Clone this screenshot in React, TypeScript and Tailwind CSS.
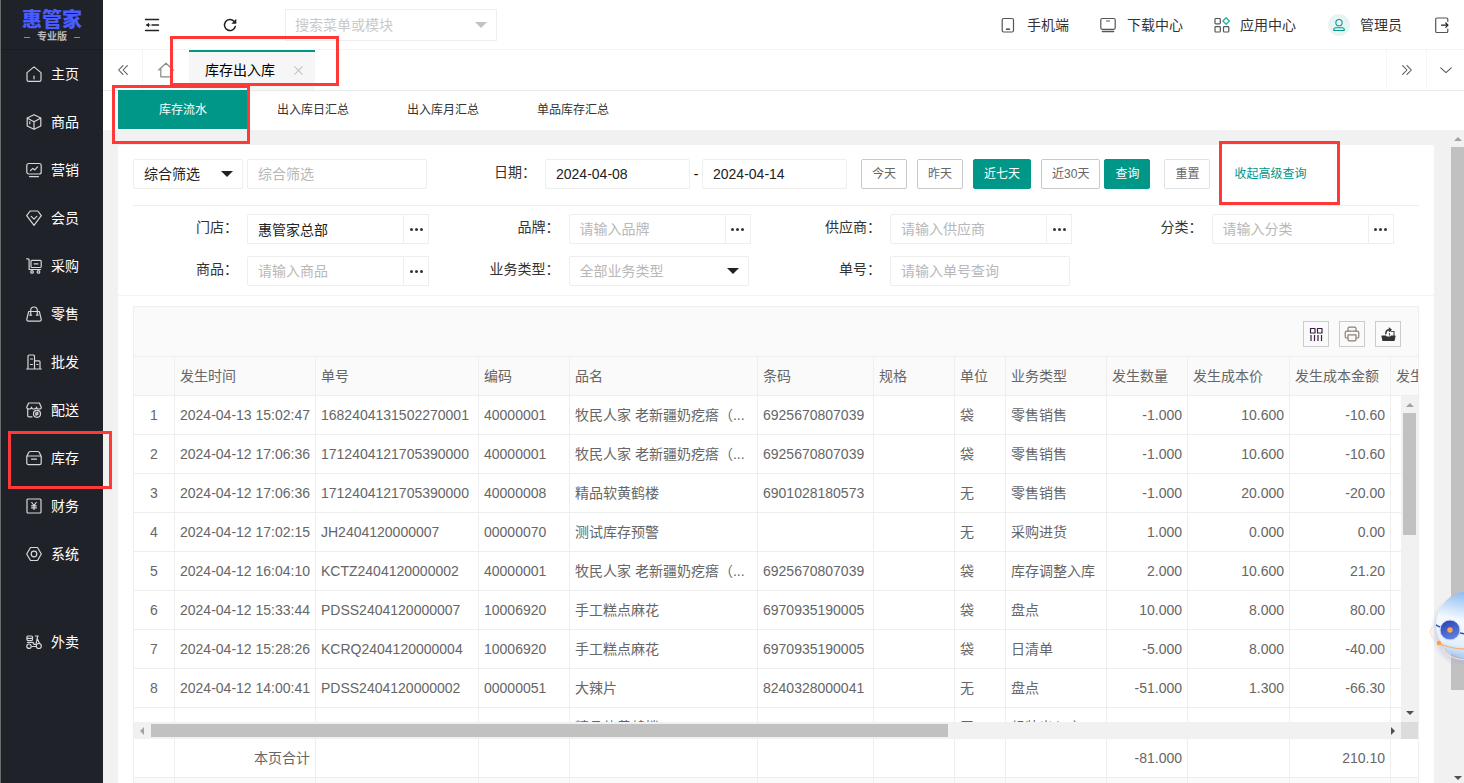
import { useState } from "react";
import type { ReactNode } from "react";

function Icon({ children, className = "" }: { children: ReactNode; className?: string }) {
  return (
    <svg
      viewBox="0 0 16 16"
      fill="none"
      stroke="currentColor"
      strokeWidth="1.2"
      strokeLinecap="round"
      strokeLinejoin="round"
      className={`size-4 shrink-0 ${className}`}
      aria-hidden="true"
    >
      {children}
    </svg>
  );
}

function Triangle({ dir, className = "" }: { dir: "up" | "down" | "left" | "right"; className?: string }) {
  const points = {
    up: "0,4 4,0 8,4",
    down: "0,0 8,0 4,4",
    left: "4,0 4,8 0,4",
    right: "0,0 4,4 0,8",
  };
  const vertical = dir === "up" || dir === "down";
  return (
    <svg
      viewBox={vertical ? "0 0 8 4" : "0 0 4 8"}
      fill="currentColor"
      className={`${vertical ? "h-1 w-2" : "h-2 w-1"} ${className}`}
      aria-hidden="true"
    >
      <polygon points={points[dir]} />
    </svg>
  );
}

// Red frame laid over a highlighted control
function Mark({ className }: { className: string }) {
  return <div className={`pointer-events-none absolute z-30 border-3 border-[#ff3838] ${className}`} />;
}

const menu = [
  {
    label: "主页",
    icon: (
      <>
        <path d="M1 6.6 8 .9l7 5.7v7.1a1.6 1.6 0 0 1-1.6 1.6H2.6A1.6 1.6 0 0 1 1 13.7z" />
        <path d="M8 10v2.8" />
      </>
    ),
  },
  {
    label: "商品",
    icon: (
      <>
        <path d="M8 .7 14.8 4v8L8 15.3 1.2 12V4z" />
        <path d="M1.5 4.3 8 7.800l6.500-3.500M8 7.800v7.200M3.800 7.500v2.200" />
      </>
    ),
  },
  {
    label: "营销",
    icon: (
      <>
        <rect x=".8" y="1.5" width="14.4" height="10.5" rx="2" />
        <path d="M3.5 14.6h9M4.500 8.600l2.300-2.200 2 1.500 2.700-3" />
      </>
    ),
  },
  {
    label: "会员",
    icon: (
      <>
        <path d="M4.200 1h7.600l3.500 4.700L8 15.300.7 5.700z" />
        <path d="M5.200 6.300 8 9.100l2.800-2.800" />
      </>
    ),
  },
  {
    label: "采购",
    icon: (
      <>
        <path d="M.7.8h1.500c.6 0 .9.400.9.900v9.800h11.500" />
        <rect x="5" y="2.3" width="10.200" height="7.200" rx="1" />
        <path d="M8.200 5.900h3.800" />
        <circle cx="6" cy="13.9" r="1.300" />
        <circle cx="12.500" cy="13.9" r="1.300" />
      </>
    ),
  },
  {
    label: "零售",
    icon: (
      <>
        <path d="M2.700 5.500h10.600l1.900 7.700c.2 1.100-.5 2-1.600 2H2.400c-1.100 0-1.800-.9-1.600-2z" />
        <path d="M4.700 9V4.300a3.300 3.300 0 0 1 6.600 0V9M3.800 9.200h1.800M10.400 9.200h1.800" />
      </>
    ),
  },
  {
    label: "批发",
    icon: (
      <>
        <path d="M.7 15h14.600M2 15V2c0-.6.400-1 1-1h4.500c.6 0 1 .4 1 1v13M8.500 6.800H13c.6 0 1 .4 1 1V15" />
        <path d="M4.500 5h2M4.500 10.500h2M10.800 10.500H12" />
      </>
    ),
  },
  {
    label: "配送",
    icon: (
      <>
        <path d="M2.600 1h10.800l1.900 4.200c0 1-1 1.800-2.300 1.800s-2.500-.8-2.500-1.800C10.500 6.200 9.400 7 8 7s-2.500-.8-2.500-1.800C5.500 6.200 4.300 7 3 7S.7 6.200.7 5.200z" />
        <path d="M1.700 7.200v6.300c0 .8.500 1.300 1.300 1.300h3" />
        <circle cx="11" cy="11.800" r="3.500" />
        <path d="m9.700 11 2-.8.300 2-2 1z" />
      </>
    ),
  },
  {
    label: "库存",
    marked: true,
    icon: (
      <>
        <path d="M.8 6.500 2.500 2.700c.3-.7.900-1.200 1.700-1.200h7.600c.8 0 1.400.5 1.700 1.200l1.700 3.800v6.400c0 1-.7 1.700-1.700 1.700h-11c-1 0-1.700-.7-1.700-1.700z" />
        <path d="M1 6h14M5.500 9.200h5" />
      </>
    ),
  },
  {
    label: "财务",
    icon: (
      <>
        <rect x="1" y="1" width="14" height="14" rx="1" />
        <path d="m5.800 4.500 2.200 3 2.200-3M8 7.500v4M5.600 7.800h4.800M5.600 9.800h4.800" />
      </>
    ),
  },
  {
    label: "系统",
    icon: (
      <>
        <path d="M4.500 1.500h7L15.300 8l-3.800 6.500h-7L.7 8z" />
        <circle cx="8" cy="8" r="2.800" />
      </>
    ),
  },
  {
    label: "外卖",
    spaced: true,
    icon: (
      <>
        <rect x="1" y="2" width="5.500" height="4.500" rx="1" />
        <path d="M1 4.300h5.500M1.500 8.300h4.500c1.400 0 2 1 2 2.200h2l1.500-7.700M9.300 2h3M11.200 4.500l2.300 5M6.300 12.500h3.500" />
        <circle cx="3" cy="12.200" r="2.200" />
        <circle cx="12.800" cy="12" r="2.500" />
      </>
    ),
  },
];

const subTabs = ["库存流水", "出入库日汇总", "出入库月汇总", "单品库存汇总"];

const columns = [
  { title: "", width: 41, align: "center" },
  { title: "发生时间", width: 141, align: "left" },
  { title: "单号", width: 163, align: "left" },
  { title: "编码", width: 91, align: "left" },
  { title: "品名", width: 188, align: "left" },
  { title: "条码", width: 116, align: "left" },
  { title: "规格", width: 81, align: "left" },
  { title: "单位", width: 51, align: "left" },
  { title: "业务类型", width: 101, align: "left" },
  { title: "发生数量", width: 81, align: "right" },
  { title: "发生成本价", width: 102, align: "right" },
  { title: "发生成本金额", width: 101, align: "right" },
  { title: "发生", width: 101, align: "right" },
];

const rows = [
  ["1", "2024-04-13 15:02:47", "1682404131502270001", "40000001", "牧民人家 老新疆奶疙瘩（...", "6925670807039", "", "袋", "零售销售", "-1.000", "10.600", "-10.60", ""],
  ["2", "2024-04-12 17:06:36", "1712404121705390000", "40000001", "牧民人家 老新疆奶疙瘩（...", "6925670807039", "", "袋", "零售销售", "-1.000", "10.600", "-10.60", ""],
  ["3", "2024-04-12 17:06:36", "1712404121705390000", "40000008", "精品软黄鹤楼", "6901028180573", "", "无", "零售销售", "-1.000", "20.000", "-20.00", ""],
  ["4", "2024-04-12 17:02:15", "JH2404120000007", "00000070", "测试库存预警", "", "", "无", "采购进货", "1.000", "0.000", "0.00", ""],
  ["5", "2024-04-12 16:04:10", "KCTZ2404120000002", "40000001", "牧民人家 老新疆奶疙瘩（...", "6925670807039", "", "袋", "库存调整入库", "2.000", "10.600", "21.20", ""],
  ["6", "2024-04-12 15:33:44", "PDSS2404120000007", "10006920", "手工糕点麻花", "6970935190005", "", "袋", "盘点", "10.000", "8.000", "80.00", ""],
  ["7", "2024-04-12 15:28:26", "KCRQ2404120000004", "10006920", "手工糕点麻花", "6970935190005", "", "袋", "日清单", "-5.000", "8.000", "-40.00", ""],
  ["8", "2024-04-12 14:00:41", "PDSS2404120000002", "00000051", "大辣片", "8240328000041", "", "无", "盘点", "-51.000", "1.300", "-66.30", ""],
  ["", "", "", "", "精品软黄鹤楼", "", "", "无", "组装出入库", "", "", "", ""],
];

const totals = ["", "本页合计", "", "", "", "", "", "", "", "-81.000", "", "210.10", ""];

const alignClass: Record<string, string> = {
  left: "text-left",
  center: "text-center",
  right: "text-right",
};

const tableClass = "w-[1358px] table-fixed border-separate border-spacing-0";
const cellClass = "h-[39px] truncate border-r border-b border-[#eee] px-[5px] font-normal";
const fieldClass =
  "h-[30px] rounded-xs border border-[#eee] bg-white px-2.5 text-[#222] outline-none placeholder:text-[#b8b8b8]";

function Cols() {
  return (
    <colgroup>
      {columns.map((c, i) => (
        <col key={i} style={{ width: c.width }} />
      ))}
    </colgroup>
  );
}

function Field({ id, label, children }: { id: string; label: string; children: ReactNode }) {
  return (
    <div className="flex">
      <label htmlFor={id} className="w-[114px] shrink-0 pr-[9px] text-right leading-[26px] text-[#333]">
        {label}：
      </label>
      {children}
    </div>
  );
}

function PickerInput({ id, placeholder, value }: { id: string; placeholder?: string; value?: string }) {
  return (
    <div className="flex">
      <input
        id={id}
        type="text"
        placeholder={placeholder}
        defaultValue={value}
        className={`${fieldClass} w-[157px] rounded-r-none`}
      />
      <button
        type="button"
        aria-label="选择"
        className="flex h-[30px] w-[25px] items-center justify-center gap-0.5 border border-l-0 border-[#eee]"
      >
        <span className="size-[3px] rounded-full bg-[#333]" />
        <span className="size-[3px] rounded-full bg-[#333]" />
        <span className="size-[3px] rounded-full bg-[#333]" />
      </button>
    </div>
  );
}

function Select({ id, text, label, className }: { id: string; text: string; label?: string; className: string }) {
  return (
    <div className="relative">
      <select id={id} aria-label={label} className={`${fieldClass} appearance-none ${className}`}>
        <option>{text}</option>
      </select>
      <svg viewBox="0 0 12 6" className="pointer-events-none absolute top-3 right-2.5 h-1.5 w-3 fill-[#222]">
        <polygon points="0,0 12,0 6,6" />
      </svg>
    </div>
  );
}

function Sidebar() {
  return (
    <aside className="relative z-20 w-[103px] shrink-0 border-l border-[#6a6a6a] bg-[#20222a] text-white">
      <div className="flex h-[50px] flex-col items-center border-b border-[#1b1d24] pt-2.5">
        <div className="text-xl leading-5 font-black text-[#4a5cff]">惠管家</div>
        <div className="mt-px flex items-center gap-[7px] text-[10px] leading-3 font-bold text-[#b9b9bb]">
          <span className="h-px w-1.5 bg-[#8b8c90]" />
          专业版
          <span className="h-px w-1.5 bg-[#8b8c90]" />
        </div>
      </div>
      <nav>
        {menu.map((m) => (
          <a
            key={m.label}
            href="#"
            className={`relative flex h-12 items-center gap-[9px] pl-[25px] ${m.spaced ? "mt-10" : ""}`}
          >
            <Icon className="text-[#d8d8da]">{m.icon}</Icon>
            {m.label}
            {m.marked && <Mark className="-top-[3px] left-[7px] h-[58px] w-[104px]" />}
          </a>
        ))}
      </nav>
    </aside>
  );
}

function Header() {
  return (
    <header className="flex h-[50px] shrink-0 items-center border-b border-[#f4f4f4] bg-white text-[#333]">
      <button type="button" aria-label="收起菜单" className="ml-[41px]">
        <Icon className="text-[#222]">
          <path d="M1.500 2.500h13M8 8h6.500M1.500 13.500h13" strokeWidth="1.400" />
          <path d="M2.500 8H6" />
          <path d="M5 5.800 2 8l3 2.200z" fill="currentColor" stroke="none" />
        </Icon>
      </button>
      <button type="button" aria-label="刷新" className="ml-[62px]">
        <Icon className="text-[#222]">
          <path d="M13.300 9.500A5.500 5.500 0 1 1 12 4.300" strokeWidth="1.500" />
          <path d="M14.300 1.800v5H9.400z" fill="currentColor" stroke="none" />
        </Icon>
      </button>
      <div className="relative ml-[47px]">
        <input
          type="text"
          aria-label="搜索菜单或模块"
          placeholder="搜索菜单或模块"
          className="h-8 w-[212px] border border-[#eee] px-[9px] outline-none placeholder:text-[#c9c9c9]"
        />
        <svg viewBox="0 0 12 6" className="absolute top-[13px] right-2.5 h-1.5 w-3 fill-[#c2c2c2]">
          <polygon points="0,0 12,0 6,6" />
        </svg>
      </div>

      <div className="ml-auto flex items-center pr-3.5">
        <a href="#" className="flex items-center gap-[11px]">
          <Icon className="text-[#555]">
            <rect x="2.200" y="1.500" width="11.300" height="13.500" rx="1.500" />
            <path d="M6.500 12.200h3" stroke="#222" />
          </Icon>
          手机端
        </a>
        <a href="#" className="ml-[31px] flex items-center gap-[11px]">
          <Icon className="text-[#555]">
            <rect x=".8" y="1.500" width="14.400" height="10.800" rx="1.500" />
            <path d="M6.500 4h3" />
            <path d="M2.500 14.500h11" strokeWidth="1.600" />
          </Icon>
          下载中心
        </a>
        <a href="#" className="ml-[31px] flex items-center gap-2.5">
          <Icon className="text-[#555]">
            <rect x="1" y="1.500" width="5.300" height="5.300" rx=".8" />
            <rect x="1" y="9.700" width="5.300" height="5.300" rx=".8" />
            <rect x="9.500" y="9.700" width="5.300" height="5.300" rx=".8" />
            <path d="m12.100.8 3.200 3.200-3.200 3.200L8.900 4z" stroke="#2db3a6" strokeWidth="1.400" />
          </Icon>
          应用中心
        </a>
        <a href="#" className="ml-8 flex items-center gap-2.5">
          <span className="flex size-[22px] items-center justify-center rounded-full bg-[#e6f5f4] text-[#009688]">
            <Icon className="size-3.5!">
              <circle cx="8" cy="5.300" r="3.600" />
              <path d="M4.500 11.200h7c1.500 0 2.500.8 2.500 2.300v.7H2v-.7c0-1.500 1-2.300 2.500-2.300z" />
            </Icon>
          </span>
          管理员
        </a>
        <button type="button" aria-label="退出" className="ml-8">
          <Icon className="text-[#555]">
            <path d="M13.800 4.500V2.300c0-.8-.5-1.300-1.300-1.300H3C2.200 1 1.700 1.500 1.700 2.300v11.900c0 .8.500 1.300 1.300 1.300h9.500c.8 0 1.300-.5 1.300-1.300V12" />
            <path d="M7.500 8.200h6.300M11.800 6 14 8.200l-2.200 2.200" stroke="#222" />
          </Icon>
        </button>
      </div>
    </header>
  );
}

function PageTabs() {
  return (
    <div className="relative flex h-10 shrink-0 bg-white text-[#555] shadow-[0_1px_1px_rgba(0,0,0,0.08)]">
      <button
        type="button"
        aria-label="向左"
        className="flex w-10 items-center justify-center border-r border-[#f4f4f4]"
      >
        <Icon className="size-3.5!">
          <path d="M8 3 3 8l5 5M13 3 8 8l5 5" />
        </Icon>
      </button>
      <button type="button" aria-label="主页" className="flex w-[46px] items-center justify-center">
        <Icon className="text-[#888]">
          <path d="M.7 8 8 1.200 15.300 8M2.800 6.500v8.300h10.400V6.500" />
        </Icon>
      </button>
      <div className="relative flex w-[126px] items-center border-t-2 border-[#009688] bg-[#f6f6f6] pr-[11px] pb-0.5 pl-4 text-black">
        库存出入库
        <button type="button" aria-label="关闭" className="ml-auto text-[#c2c2c2]">
          <Icon className="size-[11px]!">
            <path d="m2.500 2.500 11 11M13.500 2.500l-11 11" strokeWidth="1.500" />
          </Icon>
        </button>
        <Mark className="-top-4 -left-[19px] h-[50px] w-[169px]" />
      </div>
      <button
        type="button"
        aria-label="向右"
        className="ml-auto flex w-10 items-center justify-center border-l border-[#f4f4f4]"
      >
        <Icon className="size-3.5!">
          <path d="m3 3 5 5-5 5M8 3l5 5-5 5" />
        </Icon>
      </button>
      <button
        type="button"
        aria-label="更多"
        className="flex w-[38px] items-center justify-center border-l border-[#f4f4f4]"
      >
        <Icon className="size-3.5!">
          <path d="m2 5.500 6 5.500 6-5.500" />
        </Icon>
      </button>
    </div>
  );
}

function SubTabs() {
  const [active, setActive] = useState(0);
  return (
    <div className="flex h-10 shrink-0 bg-white pl-[15px] text-xs text-[#333]">
      {subTabs.map((t, i) => (
        <div key={t} className="relative">
          <button
            type="button"
            onClick={() => setActive(i)}
            className={`h-[39px] w-[130px] ${i === active ? "bg-[#009688] text-white" : ""}`}
          >
            {t}
          </button>
          {i === 0 && <Mark className="-top-[5px] -left-1.5 h-[59px] w-[138px]" />}
        </div>
      ))}
    </div>
  );
}

function Filters() {
  const plain = "h-[30px] rounded-xs border border-[#c9c9c9] bg-white px-2.5 text-xs text-[#666]";
  const solid = "h-[30px] rounded-xs border border-[#009688] bg-[#009688] px-2.5 text-xs text-white";
  return (
    <form className="border-b border-[#f4f4f4] px-[15px] pt-3.5 pb-[9px]">
      <div className="flex border-b border-[#eee] pb-4 whitespace-nowrap">
        <Select id="scope" text="综合筛选" label="筛选方式" className="w-[110px]" />
        <input
          type="text"
          aria-label="综合筛选"
          placeholder="综合筛选"
          className={`${fieldClass} ml-1 w-[180px]`}
        />
        <label htmlFor="from" className="w-[118px] pr-[9px] text-right leading-[26px] text-[#333]">
          日期：
        </label>
        <input id="from" type="text" defaultValue="2024-04-08" className={`${fieldClass} w-[145px]`} />
        <span className="w-3 text-center leading-[30px]">-</span>
        <input
          type="text"
          aria-label="结束日期"
          defaultValue="2024-04-14"
          className={`${fieldClass} w-[145px]`}
        />
        <div className="ml-3.5 flex gap-2.5">
          <button type="button" className={plain}>今天</button>
          <button type="button" className={plain}>昨天</button>
          <button type="button" className={solid}>近七天</button>
          <button type="button" className={plain}>近30天</button>
        </div>
        <button type="button" className={`${solid} ml-1`}>查询</button>
        <button type="reset" className={`${plain} ml-3.5 border-[#e2e2e2]!`}>重置</button>
        <div className="relative ml-6">
          <a href="#" className="text-xs leading-[30px] text-[#009688]">收起高级查询</a>
          <Mark className="-top-[18px] -left-[15px] h-16 w-[121px]" />
        </div>
      </div>

      <div className="grid grid-cols-4 gap-y-3 pt-2">
        <Field id="store" label="门店">
          <PickerInput id="store" value="惠管家总部" />
        </Field>
        <Field id="brand" label="品牌">
          <PickerInput id="brand" placeholder="请输入品牌" />
        </Field>
        <Field id="supplier" label="供应商">
          <PickerInput id="supplier" placeholder="请输入供应商" />
        </Field>
        <Field id="category" label="分类">
          <PickerInput id="category" placeholder="请输入分类" />
        </Field>
        <Field id="goods" label="商品">
          <PickerInput id="goods" placeholder="请输入商品" />
        </Field>
        <Field id="biz" label="业务类型">
          <Select id="biz" text="全部业务类型" className="w-[180px] text-[#b8b8b8]!" />
        </Field>
        <Field id="order" label="单号">
          <input id="order" type="text" placeholder="请输入单号查询" className={`${fieldClass} w-[180px]`} />
        </Field>
      </div>
    </form>
  );
}

function StockTable() {
  const tool = "flex size-[26px] items-center justify-center border border-[#ccc] text-[#333]";
  return (
    <div className="m-[15px] mt-2.5 overflow-hidden border border-[#eee] text-[#666]">
      <div className="flex h-[50px] items-center justify-end gap-2.5 border-b border-[#eee] bg-[#fafafa] pt-1 pr-[17px]">
        <button type="button" aria-label="筛选列" className={tool}>
          <Icon>
            <path
              d="M2.500 2.500H7V7H2.500zM9.500 2.500H14V7H9.500zM3 9v6M6.500 9v6M10 9v6M13.500 9v6"
              stroke="#3b1f45"
              strokeLinecap="butt"
            />
          </Icon>
        </button>
        <button type="button" aria-label="打印" className={tool}>
          <Icon className="text-[#8a8079]">
            <path d="M4 5V2.500C4 1.700 4.500 1.200 5.300 1.200h5.400c.8 0 1.300.5 1.300 1.300V5" />
            <path d="M4 12H2.800c-1 0-1.600-.6-1.600-1.600V6.800c0-1 .6-1.600 1.600-1.600h10.400c1 0 1.600.6 1.600 1.600v3.600c0 1-.6 1.600-1.600 1.600H12" />
            <path d="M4 8.800h8v4.700c0 .8-.5 1.300-1.300 1.300H5.300c-.8 0-1.300-.5-1.300-1.300z" />
          </Icon>
        </button>
        <button type="button" aria-label="导出" className={tool}>
          <Icon>
            <path d="M2 10h3.500l1 1h4l1-1H15l-1 4.500H3z" fill="currentColor" />
            <path d="M5.800 7.800c0-2.800 1.200-4.100 3.700-4.100" strokeWidth="1.500" />
            <path d="M8.800 1 12 3.700 8.800 6.400z" fill="currentColor" stroke="none" />
            <path d="M9.500 7.500V9M11 5.500h3V10" stroke="#5b4a66" />
          </Icon>
        </button>
      </div>

      <table className={`${tableClass} bg-[#fafafa]`}>
        <Cols />
        <thead>
          <tr>
            {columns.map((c, i) => (
              <th key={i} className={`${cellClass} text-left`}>
                {c.title}
              </th>
            ))}
          </tr>
        </thead>
      </table>

      <div className="flex h-[326px]">
        <div className="min-w-0 flex-1 overflow-hidden">
          <table className={tableClass}>
            <Cols />
            <tbody>
              {rows.map((r, i) => (
                <tr key={i}>
                  {r.map((v, j) => (
                    <td key={j} className={`${cellClass} ${alignClass[columns[j].align]}`}>
                      {v}
                    </td>
                  ))}
                </tr>
              ))}
            </tbody>
          </table>
        </div>
        <div className="flex w-[17px] flex-col items-center bg-[#f1f1f1] py-[7px]">
          <Triangle dir="up" className="text-[#a3a3a3]" />
          <div className="mt-1.5 h-[122px] w-[13px] bg-[#c1c1c1]" />
          <Triangle dir="down" className="mt-auto text-[#505050]" />
        </div>
      </div>

      <div className="flex h-[17px] bg-[#f1f1f1]">
        <div className="flex min-w-0 flex-1 items-center px-1.5">
          <Triangle dir="left" className="text-[#a3a3a3]" />
          <div className="ml-[7px] h-[13px] w-[797px] bg-[#c1c1c1]" />
          <Triangle dir="right" className="ml-auto text-[#505050]" />
        </div>
        <div className="w-[17px] bg-[#dcdcdc]" />
      </div>

      <table className={tableClass}>
        <Cols />
        <tbody>
          <tr>
            {totals.map((v, i) => (
              <td key={i} className={`${cellClass} text-right`}>
                {v}
              </td>
            ))}
          </tr>
          <tr className="bg-[#fafafa]">
            {totals.map((_, i) => (
              <td key={i} className={cellClass} />
            ))}
          </tr>
        </tbody>
      </table>
    </div>
  );
}

function Assistant() {
  return (
    <svg
      viewBox="0 0 36 76"
      className="absolute right-0 bottom-[119px] z-20 h-[76px] w-9"
      role="img"
      aria-label="在线客服"
    >
      <defs>
        <linearGradient id="shell" x1="0.3" y1="0" x2="0.1" y2="1">
          <stop offset="0" stopColor="#8fbcf3" />
          <stop offset="0.4" stopColor="#f4f9ff" />
          <stop offset="0.75" stopColor="#e4f0fc" />
          <stop offset="1" stopColor="#8dbdf2" />
        </linearGradient>
        <radialGradient id="glow" cx="0.5" cy="0.5" r="0.5">
          <stop offset="0.75" stopColor="#a9b4d8" stopOpacity="0.6" />
          <stop offset="1" stopColor="#a9b4d8" stopOpacity="0" />
        </radialGradient>
        <linearGradient id="eye" x1="0" y1="0" x2="0.4" y2="1">
          <stop offset="0" stopColor="#2a3cab" />
          <stop offset="1" stopColor="#5b7fe0" />
        </linearGradient>
      </defs>
      <circle cx="42" cy="42" r="40" fill="url(#glow)" />
      <circle cx="42" cy="37" r="34" fill="url(#shell)" />
      <path d="M8 37c2 1 3 2 5 2M32 45l6 1" stroke="#3c4fb5" strokeWidth="1.500" fill="none" />
      <circle cx="22" cy="42" r="10" fill="url(#eye)" stroke="#c9d8f8" />
      <circle cx="22" cy="42" r="2.700" fill="#ffa64d" />
      <path d="M7 37C0 42 1 48 11 55" stroke="#ffd9b8" strokeWidth="1" fill="none" />
      <path d="M11 55c7 4 16 6 27 6" stroke="#ffb06a" strokeWidth="1.300" fill="none" />
      <path d="M15 59c1 8 10 12 23 13" stroke="#ffe2c8" strokeWidth="1" fill="none" />
      <circle cx="11" cy="55" r="2.200" fill="#ff9d3b" />
    </svg>
  );
}

export default function App() {
  return (
    <div className="relative flex h-screen overflow-hidden bg-[#f1f1f1] font-['Liberation_Sans','Noto_Sans_CJK_SC',sans-serif] text-sm">
      <Sidebar />
      <div className="flex min-w-0 flex-1 flex-col">
        <Header />
        <PageTabs />
        <SubTabs />
        <div className="flex min-h-0 flex-1">
          <main className="min-w-0 flex-1 overflow-hidden pt-[15px] pr-[17px] pl-[15px]">
            <div className="rounded-xs bg-white">
              <Filters />
              <StockTable />
            </div>
          </main>
          <div className="flex w-[13px] shrink-0 flex-col items-center py-[7px] pb-[3px]">
            <Triangle dir="up" className="text-[#a3a3a3]" />
            <div className="mt-1.5 h-[543px] w-full bg-[#c1c1c1]" />
            <Triangle dir="down" className="mt-auto text-[#505050]" />
          </div>
        </div>
      </div>
      <Assistant />
    </div>
  );
}
